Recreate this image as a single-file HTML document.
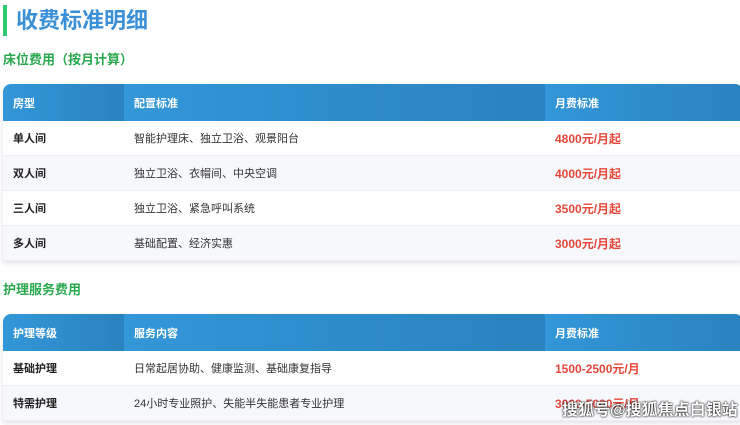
<!DOCTYPE html><html><head><meta charset="utf-8"><style>
body{margin:0;width:740px;height:425px;overflow:hidden;background:#fff;font-family:"Liberation Sans","Noto Sans CJK SC",sans-serif;position:relative}
.bar{position:absolute;left:3px;top:5px;width:4px;height:31px;background:#2ecc71}
h1{position:absolute;left:16px;top:5px;margin:0;font-size:22px;line-height:31px;color:#3a8fd6;font-weight:bold}
h2{position:absolute;left:3px;margin:0;font-size:13px;color:#2aa84e;font-weight:bold;line-height:18px}
table{position:absolute;left:3px;width:740px;border-collapse:collapse;border-radius:8px 8px 0 0;overflow:hidden;box-shadow:0 2px 6px rgba(0,0,0,.12);font-size:11px}
th{height:37px;text-align:left;color:#fff;font-weight:bold;padding:0 0 0 10px;background:linear-gradient(90deg,#3397d8,#2a82be)}
td{height:34px;padding:0 0 0 10px;color:#333;border-bottom:1px solid #eceff3;background:#fff}
tr:nth-child(odd) td{background:#f6f8fb}
td:first-child{font-weight:bold;color:#222}
td.p{color:#e5483b;font-weight:bold;font-size:12px}
.wm{position:absolute;left:562px;top:396px;font-size:16px;color:#fff;text-shadow:0 0 2px #000,0 0 1px #000;font-weight:bold;white-space:nowrap}
</style></head><body>
<div class="bar"></div><h1>收费标准明细</h1>
<h2 style="top:51px">床位费用（按月计算）</h2>
<table style="top:84px"><colgroup><col style="width:121px"><col style="width:421px"><col></colgroup>
<tr><th>房型</th><th>配置标准</th><th>月费标准</th></tr>
<tr><td>单人间</td><td>智能护理床、独立卫浴、观景阳台</td><td class="p">4800元/月起</td></tr>
<tr><td>双人间</td><td>独立卫浴、衣帽间、中央空调</td><td class="p">4000元/月起</td></tr>
<tr><td>三人间</td><td>独立卫浴、紧急呼叫系统</td><td class="p">3500元/月起</td></tr>
<tr><td>多人间</td><td>基础配置、经济实惠</td><td class="p">3000元/月起</td></tr>
</table>
<h2 style="top:281px">护理服务费用</h2>
<table style="top:314px"><colgroup><col style="width:121px"><col style="width:421px"><col></colgroup>
<tr><th>护理等级</th><th>服务内容</th><th>月费标准</th></tr>
<tr><td>基础护理</td><td>日常起居协助、健康监测、基础康复指导</td><td class="p">1500-2500元/月</td></tr>
<tr><td>特需护理</td><td>24小时专业照护、失能半失能患者专业护理</td><td class="p">3000-5000元/月</td></tr>
</table>
<div class="wm">搜狐号@搜狐焦点白银站</div>
</body></html>
